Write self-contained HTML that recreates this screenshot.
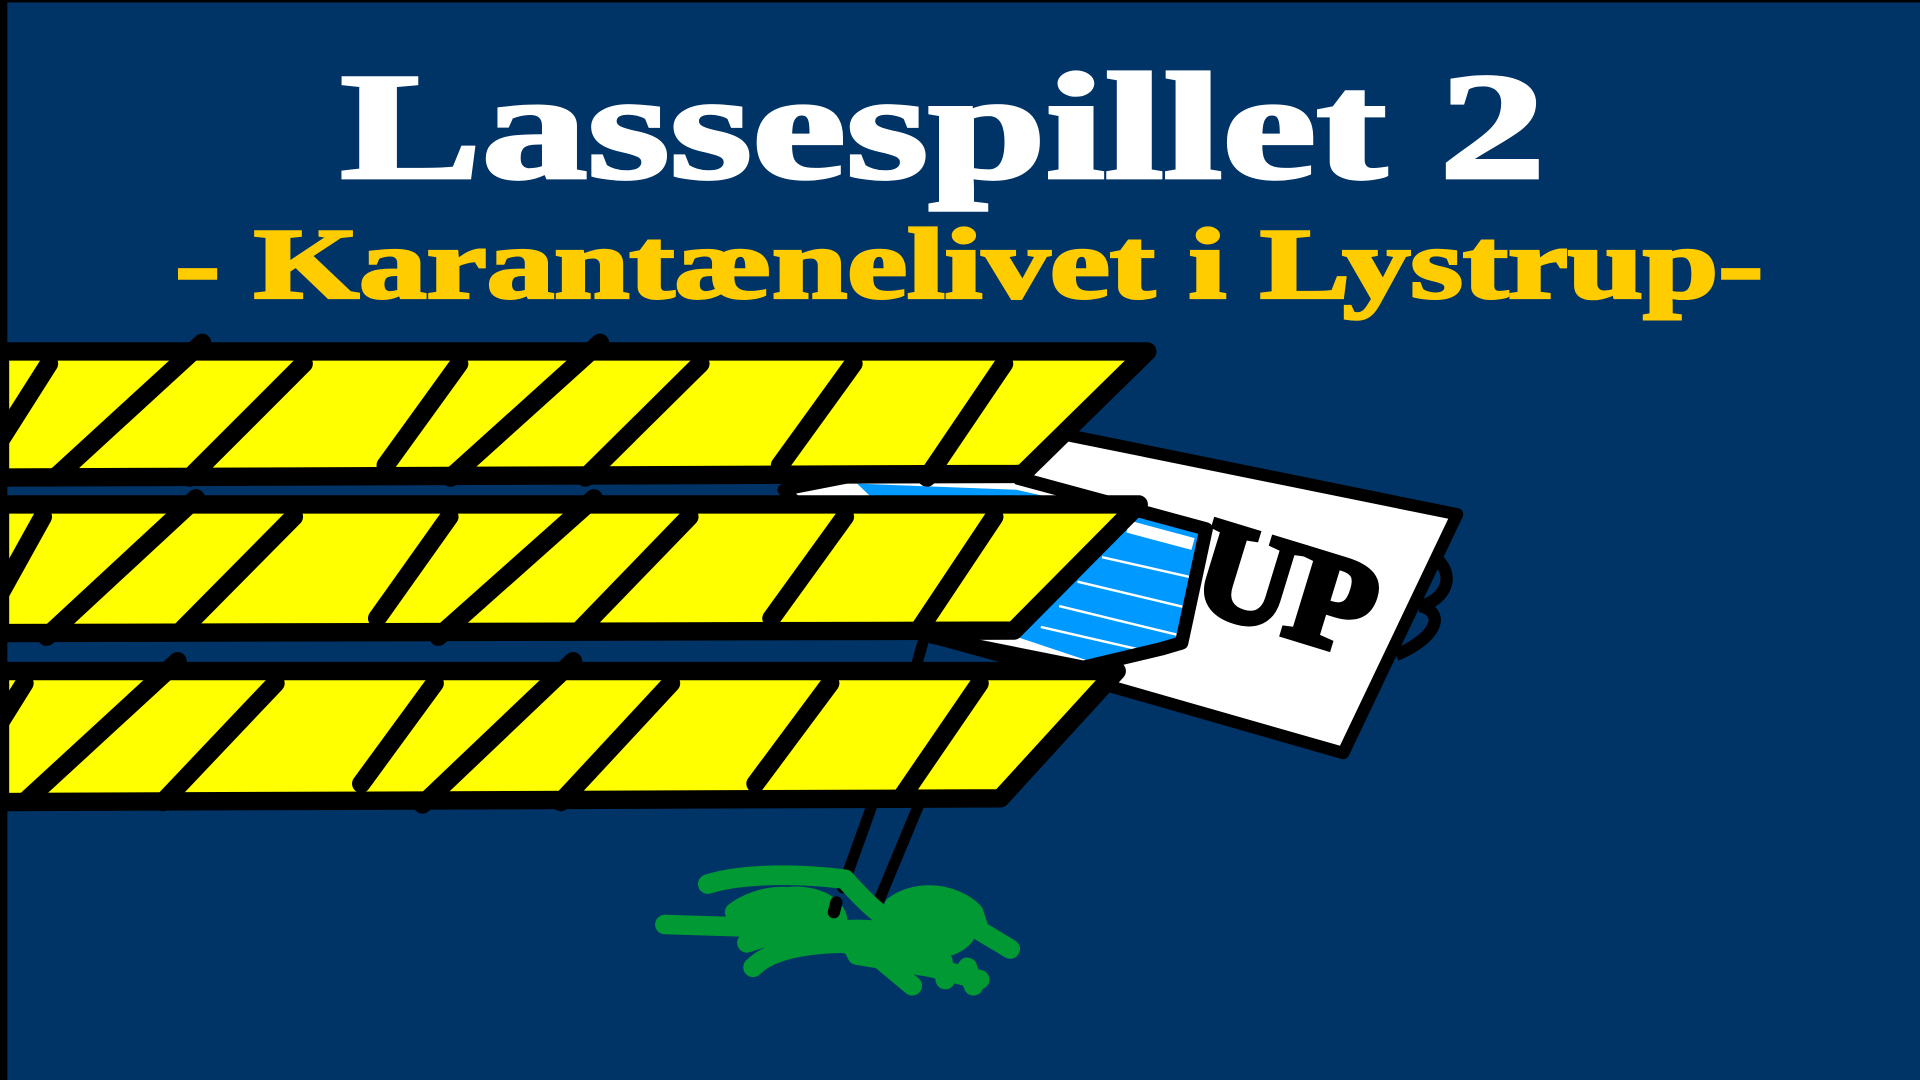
<!DOCTYPE html>
<html><head><meta charset="utf-8"><style>
html,body{margin:0;padding:0;background:#003366;overflow:hidden}
svg{display:block}
.t{font-family:"Liberation Serif","DejaVu Serif",serif;font-weight:bold}
</style></head><body>
<svg width="1920" height="1080" viewBox="0 0 1568 882" xmlns="http://www.w3.org/2000/svg">
<rect width="1568" height="882" fill="#003366"/>
<rect x="0" y="0" width="6" height="882" fill="#000"/>
<rect x="0" y="0" width="1568" height="2" fill="#000"/>
<text class="t" x="278" y="145" font-size="124" fill="#fff" stroke="#fff" stroke-width="3" textLength="984" lengthAdjust="spacingAndGlyphs">Lassespillet 2</text>
<text class="t" x="143" y="243" font-size="82" fill="#ffcc00" stroke="#ffcc00" stroke-width="2.5" textLength="1297" lengthAdjust="spacingAndGlyphs">- Karantænelivet i Lystrup-</text>

<polygon points="870,355 1190,420 1097,615 905,560 760,520 640,400" fill="#fff" stroke="#000" stroke-width="10" stroke-linejoin="round"/>
<polygon points="700,395 830,400 985,435 968,520 950,530 890,540 830,520" fill="#0099ff"/>
<g stroke="#fff" stroke-width="2">
<line x1="900" y1="455" x2="975" y2="472"/><line x1="880" y1="475" x2="972" y2="497"/><line x1="865" y1="495" x2="968" y2="520"/><line x1="850" y1="512" x2="950" y2="535"/>
</g>
<rect x="920" y="432" width="55" height="10" fill="#fff" transform="rotate(15 947 438)"/>
<polyline points="830,390 985,432 965,525 948,530 885,545 760,520" fill="none" stroke="#000" stroke-width="11" stroke-linejoin="round"/>
<text class="t" x="975" y="520" font-size="110" fill="#000" stroke="#000" stroke-width="6" transform="rotate(17 1060 490)">UP</text>
<path d="M1172,455 C1190,470 1180,490 1160,495 C1180,500 1175,520 1140,535" fill="none" stroke="#000" stroke-width="10"/>

<g stroke="#000" stroke-width="9" stroke-linecap="round">
<line x1="712" y1="658" x2="688" y2="725"/><line x1="750" y1="658" x2="718" y2="735"/>
<line x1="755" y1="520" x2="748" y2="545"/>
</g>
<g fill="#009933">
<ellipse cx="650" cy="752" rx="42" ry="28"/>
<ellipse cx="760" cy="758" rx="38" ry="25"/>
<ellipse cx="700" cy="765" rx="40" ry="14"/>
</g>
<g fill="none" stroke="#009933" stroke-width="16" stroke-linecap="round" stroke-linejoin="round">
<path d="M543,755 L640,758 L700,760"/>
<path d="M578,722 C600,715 640,712 690,718 C705,735 720,750 740,760"/>
<path d="M600,745 C620,730 650,728 665,740 L690,760 L700,780 L760,790 L800,800"/>
<path d="M615,790 C630,775 660,770 700,770 L740,775"/>
<path d="M730,740 C750,725 780,730 795,745 L800,760 L825,775"/>
<path d="M715,780 L745,805"/><path d="M770,785 L772,800"/><path d="M790,790 L795,805"/>
<path d="M610,770 L640,760 L660,770"/>
</g>
<line x1="683" y1="737" x2="681" y2="745" stroke="#000" stroke-width="10" stroke-linecap="round"/>

<g stroke="#000" stroke-width="15" stroke-linecap="round" stroke-linejoin="round">
<polygon points="0,287 937,287 835,387 0,390" fill="#ffff00"/>
<polygon points="0,412 930,412 828,515 0,517" fill="#ffff00"/>
<polygon points="0,548 912,548 817,652 0,655" fill="#ffff00"/>
<path fill="none" d="M40,297L0,360 M165,280L45,390 M248,297L155,390 M375,297L315,380 M490,280L368,390 M572,297L478,390 M697,297L637,380 M820,297L757,390
M35,422L0,485 M160,407L38,520 M240,422L148,515 M367,422L308,505 M485,407L358,520 M563,422L473,515 M690,422L630,505 M812,422L750,515
M20,558L0,590 M145,540L20,655 M225,558L133,655 M355,558L295,640 M468,540L345,657 M548,558L458,655 M678,558L617,640 M800,558L737,650"/>
</g>
</svg>
</body></html>
